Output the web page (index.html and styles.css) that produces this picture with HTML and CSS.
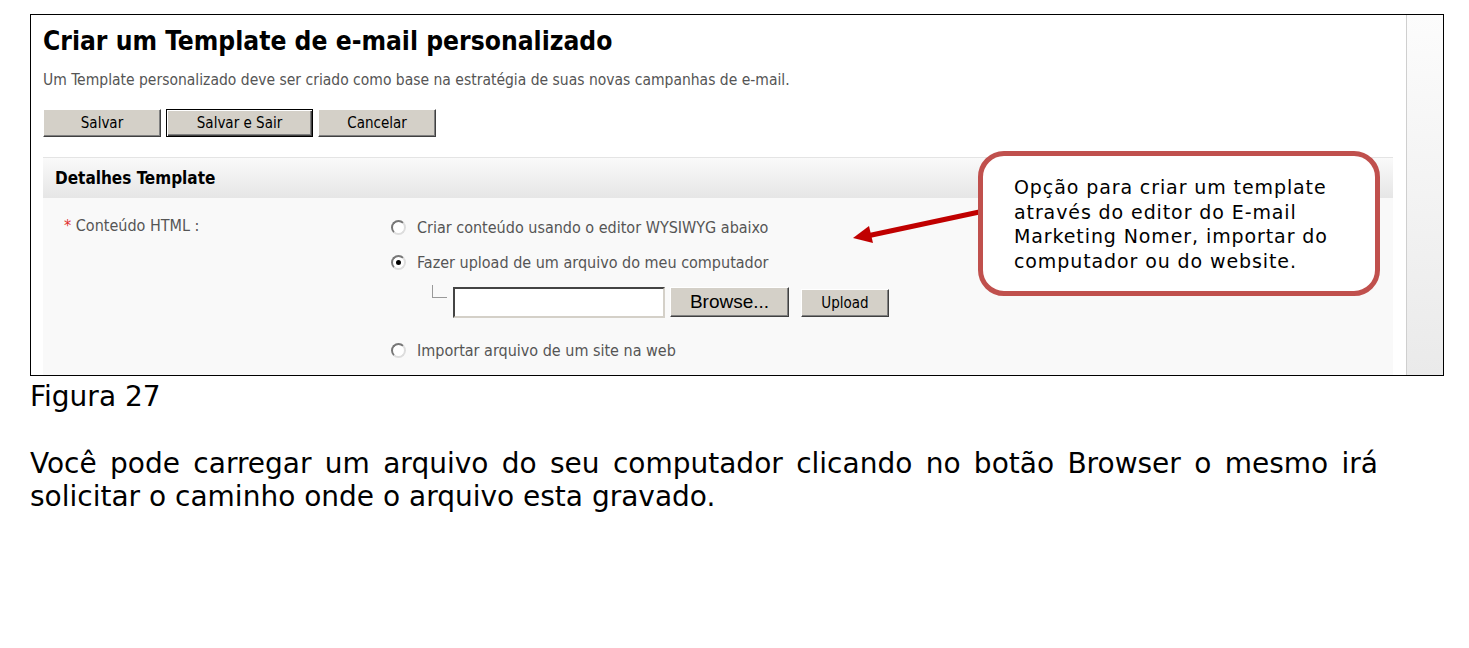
FILE: index.html
```html
<!DOCTYPE html>
<html lang="pt">
<head>
    <meta charset="UTF-8">
    <title>Figura 27</title>
    <link rel="stylesheet" href="styles.css">
</head>
<body>
    <div class="figure">
        <div class="app">
            <h1>Criar um Template de e-mail personalizado</h1>
            <p class="intro">Um Template personalizado deve ser criado como base na estratégia de suas novas campanhas de e-mail.</p>
            <div class="actions">
                <button class="btn">Salvar</button>
                <button class="btn default">Salvar e Sair</button>
                <button class="btn">Cancelar</button>
            </div>
            <div class="section">
                <div class="section-head">Detalhes Template</div>
                <div class="section-body">
                    <div class="label"><span class="req">*</span> Conteúdo HTML :</div>
                    <div class="options">
                        <div class="option"><span class="radio"></span>Criar conteúdo usando o editor WYSIWYG abaixo</div>
                        <div class="option"><span class="radio checked"></span>Fazer upload de um arquivo do meu computador</div>
                        <div class="upload-row">
                            <span class="branch"></span>
                            <span class="file-input"></span>
                            <button class="btn browse">Browse...</button>
                            <button class="btn upload">Upload</button>
                        </div>
                        <div class="option"><span class="radio"></span>Importar arquivo de um site na web</div>
                    </div>
                </div>
            </div>
        </div>
        <div class="scroll"></div>

        <svg class="arrow" width="1413" height="361" viewBox="0 0 1413 361">
            <line x1="953" y1="196" x2="836" y2="221" stroke="#c00000" stroke-width="5"/>
            <polygon points="822,223 838,211 842,228" fill="#c00000"/>
        </svg>
        <div class="callout">Opção para criar um template através do editor do E-mail Marketing Nomer, importar do computador ou do website.</div>
    </div>

    <p class="caption">Figura 27</p>
    <p class="text">Você pode carregar um arquivo do seu computador clicando no botão Browser o mesmo irá solicitar o caminho onde o arquivo esta gravado.</p>
</body>
</html>
```

FILE: styles.css
```css
body {
    margin: 0;
    background: #fff;
    font-family: "DejaVu Sans", Verdana, sans-serif;
    color: #000;
}

.figure {
    position: relative;
    display: flex;
    width: 1412px;
    height: 360px;
    margin: 14px 0 0 30px;
    border: 1px solid #000;
    overflow: hidden;
}

.app {
    flex: 1;
    padding: 0 13px 0 12px;
    font-family: "DejaVu Sans Condensed", "DejaVu Sans", Tahoma, sans-serif;
}

.scroll {
    width: 36px;
    border-left: 1px solid #cfcfcf;
    background: linear-gradient(#fcfcfc, #eaeaea);
}

h1 {
    margin: 11px 0 0;
    font-size: 26.2px;
    line-height: 30px;
    font-weight: bold;
}

.intro {
    margin: 15px 0 0;
    font-size: 15.5px;
    line-height: 18px;
    color: #555;
}

.actions {
    display: flex;
    gap: 5px;
    margin-top: 20px;
}

.btn {
    height: 28px;
    padding: 0;
    background: #d4d0c8;
    border: 1px solid;
    border-color: #fff #404040 #404040 #fff;
    box-shadow: inset -1px -1px #808080;
    font-family: "DejaVu Sans Condensed", "DejaVu Sans", Tahoma, sans-serif;
    font-size: 15px;
    color: #000;
}

.actions .btn {
    width: 118px;
}

.actions .default {
    width: 147px;
    border: 1px solid #000;
    box-shadow: inset 1px 1px #fff, inset -1px -1px #404040, inset -2px -2px #808080;
}

.section {
    margin-top: 20px;
    border-top: 1px solid #e4e4e4;
}

.section-head {
    height: 40px;
    padding-left: 12px;
    line-height: 40px;
    font-weight: bold;
    font-size: 17px;
    background: linear-gradient(#fafafa, #e6e6e6);
}

.section-body {
    display: flex;
    height: 200px;
    background: #f9f9f9;
}

.label {
    width: 327px;
    padding: 18px 0 0 21px;
    font-size: 16px;
    line-height: 20px;
    color: #555;
}

.req {
    color: #e03030;
}

.options {
    padding-top: 19px;
    font-size: 16px;
    color: #555;
}

.option {
    display: flex;
    align-items: center;
    height: 20px;
    margin-bottom: 15px;
}

.radio {
    width: 11px;
    height: 11px;
    margin-right: 11px;
    border: 2px solid;
    border-color: #777 #ddd #ddd #777;
    border-radius: 50%;
    background: #fff;
    position: relative;
}

.checked::after {
    content: "";
    position: absolute;
    left: 3px;
    top: 3px;
    width: 5px;
    height: 5px;
    border-radius: 50%;
    background: #000;
}

.upload-row {
    display: flex;
    align-items: flex-start;
    margin: 5px 0 22px 41px;
}

.branch {
    width: 14px;
    height: 12px;
    margin: -2px 6px 0 0;
    border-left: 1px solid #999;
    border-bottom: 1px solid #999;
}

.file-input {
    width: 208px;
    height: 27px;
    border: 2px solid;
    border-color: #444 #d4d0c8 #d4d0c8 #444;
    background: #fff;
}

.browse {
    width: 119px;
    height: 30px;
    margin-left: 5px;
    font-family: "Liberation Sans", Arial, sans-serif;
    font-size: 19px;
}

.upload {
    width: 88px;
    height: 28px;
    margin: 2px 0 0 12px;
    font-family: "DejaVu Sans Condensed", "DejaVu Sans", Tahoma, sans-serif;
    font-size: 15px;
}

.arrow {
    position: absolute;
    left: 0;
    top: 0;
    pointer-events: none;
}

.callout {
    position: absolute;
    left: 947px;
    top: 136px;
    width: 331px;
    height: 116px;
    padding: 19px 30px 0 31px;
    border: 5px solid #c0504d;
    border-radius: 26px;
    background: #fff;
    font-size: 19px;
    line-height: 24.5px;
    letter-spacing: 0.9px;
}

.caption {
    margin: 4px 0 0 30px;
    font-size: 28px;
    line-height: 33px;
}

.text {
    width: 1348px;
    margin: 34px 0 0 30px;
    font-size: 28px;
    line-height: 33px;
    text-align: justify;
}
```
